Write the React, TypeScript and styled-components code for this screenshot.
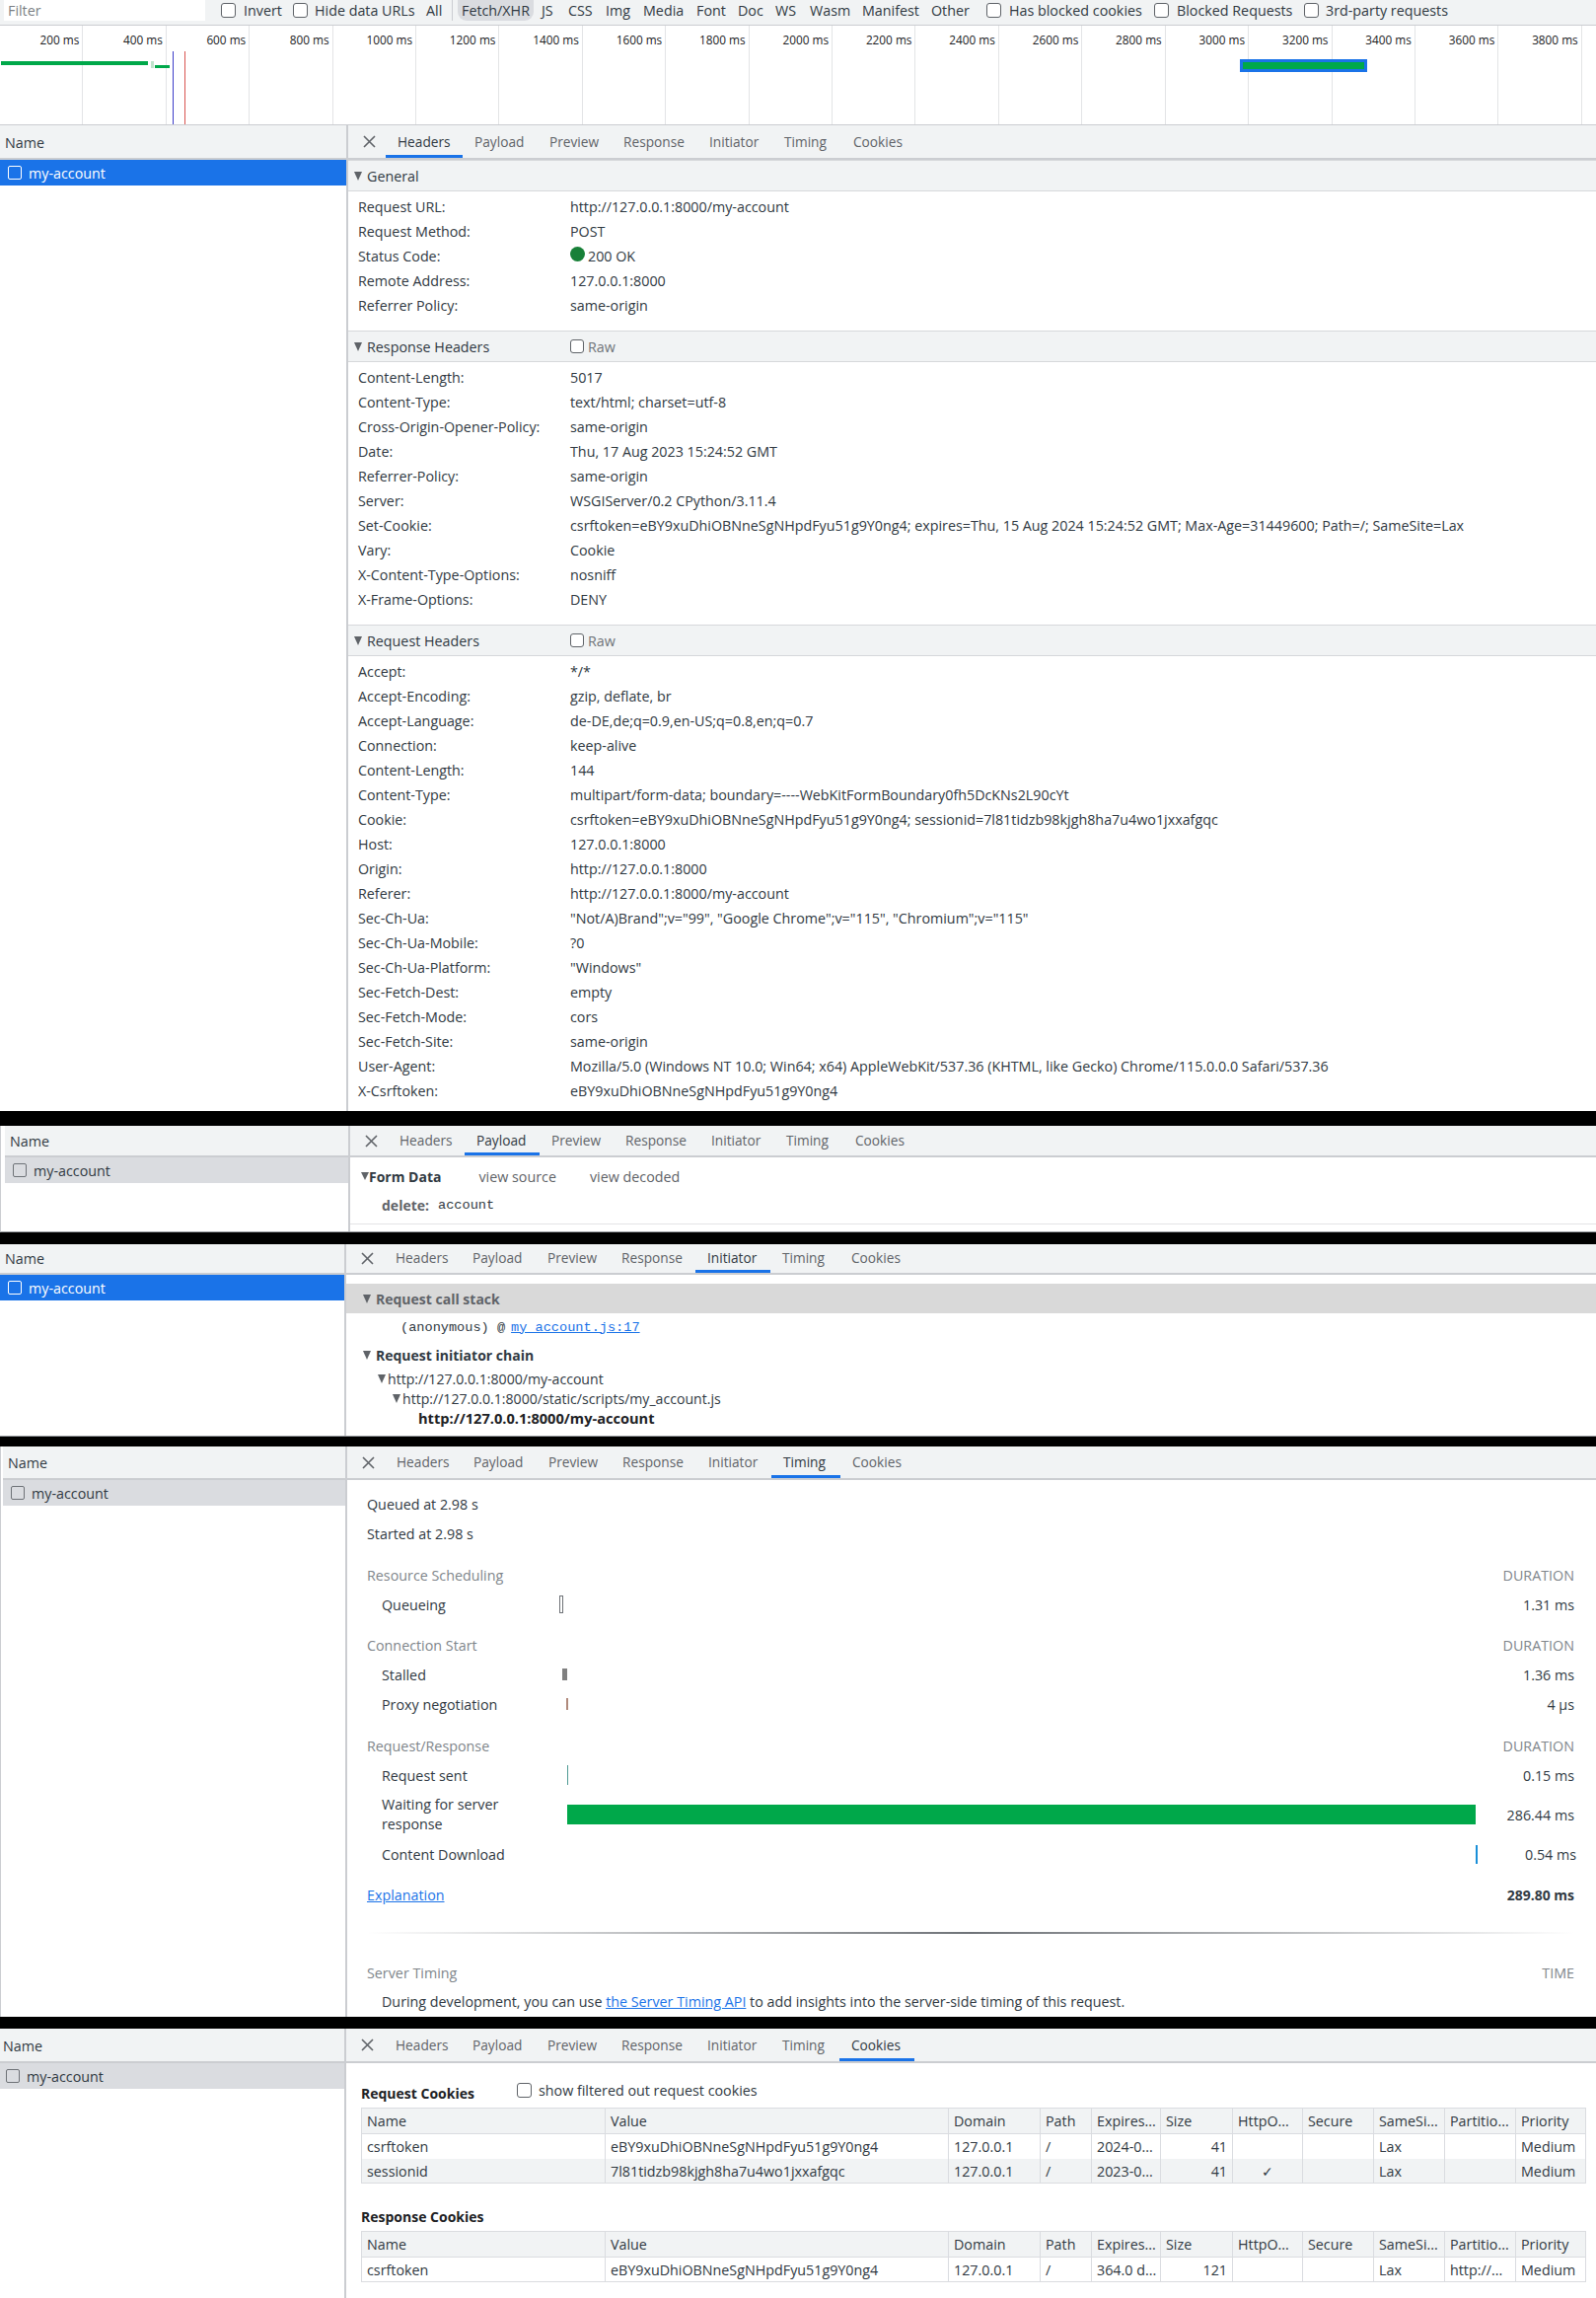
import React from 'react'
import styled, { createGlobalStyle } from 'styled-components'

const GlobalStyle = createGlobalStyle`
  html, body {
    margin: 0;
    padding: 0;
    background: #000;
  }
  body {
    font-family: 'Open Sans', 'Noto Sans', sans-serif;
    font-size: 14.3px;
    color: #303942;
  }
  * {
    box-sizing: border-box;
  }
`

const Page = styled.div`
  width: 1618px;
  height: 2329px;
  overflow: hidden;
  display: flex;
  flex-direction: column;
  background: #000;
`

/* top toolbar */
const Toolbar = styled.div`
  height: 26px;
  display: flex;
  align-items: flex-start;
  background: #f1f3f4;
  border-bottom: 1px solid #cbcdd1;
  white-space: nowrap;
`

const FilterInput = styled.div`
  width: 204px;
  height: 21px;
  margin-left: 4px;
  margin-right: 16px;
  padding-left: 4px;
  line-height: 21px;
  background: #fff;
  color: #7b7f84;
`

const ToolLabel = styled.span<{ $width: number }>`
  display: inline-flex;
  align-items: center;
  width: ${p => p.$width}px;
  height: 21px;
  flex: none;
`

const CheckBox = styled.span<{ $gap?: number }>`
  display: inline-block;
  flex: none;
  width: 15px;
  height: 15px;
  margin-right: ${p => p.$gap ?? 8}px;
  background: #fff;
  border: 1.5px solid #5f6368;
  border-radius: 3px;
`

const ToolSep = styled.span`
  width: 1px;
  height: 21px;
  margin: 0 5px 0 0;
  background: #cbcdd1;
  flex: none;
`

const FilterChip = styled.span<{ $active?: boolean; $width: number }>`
  display: inline-flex;
  align-items: center;
  justify-content: ${p => (p.$active ? 'center' : 'flex-start')};
  width: ${p => p.$width}px;
  height: 21px;
  flex: none;
  border-radius: 0 0 9px 9px;
  background: ${p => (p.$active ? '#dadce0' : 'transparent')};
`

/* overview */
const Overview = styled.div`
  position: relative;
  height: 101px;
  display: flex;
  background: #fff;
  border-bottom: 1px solid #cbcdd1;
  overflow: hidden;
`

const Tick = styled.div`
  flex: none;
  width: 84.42px;
  padding: 4px 3px 0 0;
  text-align: right;
  font-size: 11.8px;
  line-height: 20px;
  color: #202124;
  border-right: 1px solid #e3e4e6;
  white-space: nowrap;
`

const OverviewBar = styled.div<{ $x: number; $y: number; $w: number; $h: number; $c: string }>`
  position: absolute;
  left: ${p => p.$x}px;
  top: ${p => p.$y}px;
  width: ${p => p.$w}px;
  height: ${p => p.$h}px;
  background: ${p => p.$c};
`

const SelectedBar = styled(OverviewBar)`
  border: 3px solid #1a73e8;
`

/* panels */
const Panel = styled.div<{ $height: number; $gutter?: number; $gutterLine?: boolean; $bottomLine?: boolean; $nameWidth: number }>`
  height: ${p => p.$height}px;
  flex: none;
  display: grid;
  grid-template-columns: ${p => p.$nameWidth}px 1fr;
  padding-left: ${p => p.$gutter ?? 0}px;
  background: #fff;
  overflow: hidden;
  border-left: ${p => (p.$gutterLine ? '1px solid #cbcdd1' : 'none')};
  border-bottom: ${p => (p.$bottomLine ? '1px solid #9a9da1' : 'none')};
`

const Gap = styled.div<{ $height: number }>`
  height: ${p => p.$height}px;
  flex: none;
  background: #000;
`

const NameColumn = styled.div`
  border-right: 2px solid #cbcdd1;
  min-width: 0;
`

const NameHeader = styled.div<{ $height: number; $inset: number; $lift: number }>`
  height: ${p => p.$height}px;
  padding-left: ${p => p.$inset}px;
  line-height: ${p => p.$height - p.$lift}px;
  background: #f1f3f4;
  border-bottom: 2px solid #cbcdd1;
  color: #303942;
`

const NameRow = styled.div<{ $selected?: boolean; $inset: number }>`
  height: 26px;
  display: flex;
  align-items: center;
  gap: 7px;
  padding-left: ${p => p.$inset}px;
  background: ${p => (p.$selected ? '#1a73e8' : '#dadce0')};
  color: ${p => (p.$selected ? '#fff' : '#303942')};
`

const FileIcon = styled.span<{ $selected?: boolean }>`
  width: 14px;
  height: 14px;
  border: 1.5px solid ${p => (p.$selected ? '#fff' : '#6e7277')};
  border-radius: 2px;
`

const Detail = styled.div`
  min-width: 0;
`

const TabBar = styled.div<{ $height: number }>`
  height: ${p => p.$height}px;
  display: grid;
  grid-template-columns: 38px 78px 76px 75px 87px 76px 70px 76px;
  background: #f1f3f4;
  border-bottom: 2px solid #cbcdd1;
`

const Close = styled.div`
  display: flex;
  align-items: center;
  justify-content: center;
  padding-left: 4px;
  color: #5f6368;
`

const Tab = styled.div<{ $active?: boolean; $height: number; $lift: number }>`
  height: ${p => p.$height}px;
  padding-left: 12px;
  font-size: 13.7px;
  line-height: ${p => p.$height - p.$lift}px;
  color: ${p => (p.$active ? '#303942' : '#5f6368')};
  border-bottom: 3px solid ${p => (p.$active ? '#1a73e8' : 'transparent')};
  white-space: nowrap;
`

/* headers tab */
const SectionHead = styled.div`
  height: 32px;
  display: grid;
  grid-template-columns: 219px 1fr;
  align-items: center;
  padding-left: 6px;
  background: #f1f3f4;
  border-top: 1px solid #d6d8db;
  border-bottom: 1px solid #d6d8db;
  color: #303942;
`

const SectionTitle = styled.div`
  display: flex;
  align-items: center;
  gap: 5px;
`

const Triangle = styled.span<{ $color?: string; $size?: number }>`
  display: inline-block;
  flex: none;
  width: 0;
  height: 0;
  border-left: ${p => (p.$size ?? 9) / 2}px solid transparent;
  border-right: ${p => (p.$size ?? 9) / 2}px solid transparent;
  border-top: ${p => p.$size ?? 9}px solid ${p => p.$color ?? '#5f6368'};
`

const RawToggle = styled.div`
  display: flex;
  align-items: center;
  color: #6f7378;
`

const SmallCheck = styled(CheckBox)`
  width: 14px;
  height: 14px;
  margin-right: 4px;
  border-width: 1px;
`

const Rows = styled.div<{ $bottom: number }>`
  padding: 3px 0 ${p => p.$bottom}px 10px;
`

const HeaderRow = styled.div`
  height: 25px;
  display: grid;
  grid-template-columns: 215px 1fr;
  align-items: center;
  white-space: nowrap;
  color: #303942;
`

const ValueCell = styled.span`
  display: flex;
  align-items: center;
`

const StatusDot = styled.span`
  flex: none;
  width: 15px;
  height: 15px;
  margin: -4px 3px 0 0;
  border-radius: 50%;
  background: #188038;
`

/* payload tab */
const FormHead = styled.div`
  height: 38px;
  display: flex;
  align-items: center;
  padding-left: 11px;
`

const BoldLabel = styled.span`
  font-size: 14px;
  font-weight: 700;
  color: #303942;
`

const PlainLink = styled.span<{ $gap: number }>`
  margin-left: ${p => p.$gap}px;
  color: #5f6368;
`

const FormRow = styled.div`
  height: 30px;
  padding: 0 0 8px 32px;
  display: flex;
  align-items: center;
  gap: 9px;
  border-bottom: 1px solid #e3e4e6;
`

const FormKey = styled.span`
  font-size: 14px;
  font-weight: 700;
  color: #5f6368;
`

const Mono = styled.span`
  font-family: 'Liberation Mono', 'DejaVu Sans Mono', monospace;
  font-size: 13.6px;
  color: #303942;
`

/* initiator tab */
const CallStackHead = styled.div`
  height: 30px;
  margin-top: 9px;
  display: flex;
  align-items: center;
  gap: 5px;
  padding-left: 17px;
  background: #d9d9d9;
  color: #5f6368;
  font-size: 14px;
  font-weight: 700;
`

const StackLine = styled.div`
  height: 28px;
  display: flex;
  align-items: center;
  padding-left: 55px;
`

const MonoLink = styled(Mono)`
  color: #1a73e8;
  text-decoration: underline;
  margin-left: 6px;
`

const ChainHead = styled.div`
  height: 28px;
  display: flex;
  align-items: center;
  gap: 5px;
  padding-left: 17px;
  font-size: 14px;
  font-weight: 700;
  color: #303942;
`

const ChainLine = styled.div<{ $indent: number; $bold?: boolean }>`
  height: 20px;
  display: flex;
  align-items: center;
  gap: 2px;
  padding-left: ${p => p.$indent}px;
  font-size: ${p => (p.$bold ? 14.6 : 14.1)}px;
  font-weight: ${p => (p.$bold ? 700 : 400)};
  color: ${p => (p.$bold ? '#202124' : '#303942')};
`

/* timing tab */
const TimingBody = styled.div`
  padding: 10px 22px 0 20px;
`

const TimingLine = styled.div<{ $indent?: number; $height?: number }>`
  height: ${p => p.$height ?? 30}px;
  padding-left: ${p => p.$indent ?? 0}px;
  display: grid;
  grid-template-columns: 180px 1fr 100px;
  align-items: center;
  color: #303942;
`

const Plain = styled.div<{ $top?: number; $indent?: number }>`
  height: 30px;
  margin-top: ${p => p.$top ?? 0}px;
  padding-left: ${p => p.$indent ?? 0}px;
  line-height: 30px;
  white-space: nowrap;
`

const TwoEnds = styled.div<{ $top?: number; $muted?: boolean }>`
  height: 30px;
  margin-top: ${p => p.$top ?? 0}px;
  display: flex;
  justify-content: space-between;
  align-items: center;
  color: ${p => (p.$muted ? '#80868b' : '#303942')};
`

const RightValue = styled.div`
  text-align: right;
  white-space: nowrap;
`

const WaitLabel = styled.div`
  line-height: 20px;
`

const Bar = styled.div<{ $x: number; $w: number; $h: number; $c: string; $outline?: boolean }>`
  margin-left: ${p => p.$x}px;
  width: ${p => p.$w}px;
  height: ${p => p.$h}px;
  background: ${p => (p.$outline ? 'transparent' : p.$c)};
  border: ${p => (p.$outline ? `1px solid ${p.$c}` : 'none')};
`

const Link = styled.span`
  color: #1a73e8;
  text-decoration: underline;
`

const Divider = styled.div`
  height: 2px;
  margin-top: 23px;
  background: linear-gradient(90deg, #fff, #6e7277 50%, #fff);
`

/* cookies tab */
const CookieBody = styled.div`
  padding: 15px 11px 0 15px;
`

const CookieTitle = styled.div<{ $top?: number }>`
  height: 30px;
  margin-top: ${p => p.$top ?? 0}px;
  display: flex;
  align-items: center;
  font-size: 14px;
  font-weight: 700;
  color: #202124;
`

const FilterToggle = styled.span`
  display: inline-flex;
  align-items: center;
  margin: -6px 0 0 43px;
  font-size: 14.3px;
  font-weight: 400;
  color: #303942;
`

const CookieTable = styled.table`
  width: 1241px;
  border-collapse: collapse;
  table-layout: fixed;
  border: 1px solid #dadce0;
`

const Th = styled.th`
  height: 26px;
  padding: 0 5px;
  text-align: left;
  font-weight: 400;
  background: #f1f3f4;
  border: 1px solid #dadce0;
  color: #303942;
  white-space: nowrap;
  overflow: hidden;
`

const Td = styled.td<{ $right?: boolean; $center?: boolean }>`
  height: 25px;
  padding: 1px 5px 0;
  text-align: ${p => (p.$right ? 'right' : p.$center ? 'center' : 'left')};
  border-left: 1px solid #dadce0;
  border-right: 1px solid #dadce0;
  color: #303942;
  white-space: nowrap;
  overflow: hidden;
`

const Tr = styled.tr<{ $alt?: boolean }>`
  background: ${p => (p.$alt ? '#f1f3f4' : '#fff')};
`

const tickLabels = Array.from({ length: 19 }, (_, i) => `${(i + 1) * 200} ms`)
const tabNames = ['Headers', 'Payload', 'Preview', 'Response', 'Initiator', 'Timing', 'Cookies']

const general = [
  ['Request URL:', 'http://127.0.0.1:8000/my-account'],
  ['Request Method:', 'POST'],
  ['Status Code:', '200 OK'],
  ['Remote Address:', '127.0.0.1:8000'],
  ['Referrer Policy:', 'same-origin'],
]

const responseHeaders = [
  ['Content-Length:', '5017'],
  ['Content-Type:', 'text/html; charset=utf-8'],
  ['Cross-Origin-Opener-Policy:', 'same-origin'],
  ['Date:', 'Thu, 17 Aug 2023 15:24:52 GMT'],
  ['Referrer-Policy:', 'same-origin'],
  ['Server:', 'WSGIServer/0.2 CPython/3.11.4'],
  ['Set-Cookie:', 'csrftoken=eBY9xuDhiOBNneSgNHpdFyu51g9Y0ng4; expires=Thu, 15 Aug 2024 15:24:52 GMT; Max-Age=31449600; Path=/; SameSite=Lax'],
  ['Vary:', 'Cookie'],
  ['X-Content-Type-Options:', 'nosniff'],
  ['X-Frame-Options:', 'DENY'],
]

const requestHeaders = [
  ['Accept:', '*/*'],
  ['Accept-Encoding:', 'gzip, deflate, br'],
  ['Accept-Language:', 'de-DE,de;q=0.9,en-US;q=0.8,en;q=0.7'],
  ['Connection:', 'keep-alive'],
  ['Content-Length:', '144'],
  ['Content-Type:', 'multipart/form-data; boundary=----WebKitFormBoundary0fh5DcKNs2L90cYt'],
  ['Cookie:', 'csrftoken=eBY9xuDhiOBNneSgNHpdFyu51g9Y0ng4; sessionid=7l81tidzb98kjgh8ha7u4wo1jxxafgqc'],
  ['Host:', '127.0.0.1:8000'],
  ['Origin:', 'http://127.0.0.1:8000'],
  ['Referer:', 'http://127.0.0.1:8000/my-account'],
  ['Sec-Ch-Ua:', '"Not/A)Brand";v="99", "Google Chrome";v="115", "Chromium";v="115"'],
  ['Sec-Ch-Ua-Mobile:', '?0'],
  ['Sec-Ch-Ua-Platform:', '"Windows"'],
  ['Sec-Fetch-Dest:', 'empty'],
  ['Sec-Fetch-Mode:', 'cors'],
  ['Sec-Fetch-Site:', 'same-origin'],
  ['User-Agent:', 'Mozilla/5.0 (Windows NT 10.0; Win64; x64) AppleWebKit/537.36 (KHTML, like Gecko) Chrome/115.0.0.0 Safari/537.36'],
  ['X-Csrftoken:', 'eBY9xuDhiOBNneSgNHpdFyu51g9Y0ng4'],
]

const cookieColumns = [247, 348, 93, 52, 70, 73, 71, 72, 72, 72, 71]
const cookieHeads = ['Name', 'Value', 'Domain', 'Path', 'Expires...', 'Size', 'HttpO...', 'Secure', 'SameSi...', 'Partitio...', 'Priority']
const token = 'eBY9xuDhiOBNneSgNHpdFyu51g9Y0ng4'

const Tabs = ({ active, height, lift = 0 }: { active: string; height: number; lift?: number }) => (
  <TabBar $height={height}>
    <Close>
      <svg width="15" height="15" viewBox="0 0 15 15" fill="none" stroke="#5f6368" strokeWidth="1.6">
        <path d="M2 2l11 11M13 2L2 13" />
      </svg>
    </Close>
    {tabNames.map(t => (
      <Tab key={t} $active={t === active} $height={height - 2} $lift={lift}>{t}</Tab>
    ))}
  </TabBar>
)

const NamePane = ({ height, inset, selected, lift = 0 }: { height: number; inset: number; selected?: boolean; lift?: number }) => (
  <NameColumn>
    <NameHeader $height={height} $inset={inset} $lift={lift}>Name</NameHeader>
    <NameRow $selected={selected} $inset={inset + 3}>
      <FileIcon $selected={selected} />
      my-account
    </NameRow>
  </NameColumn>
)

const KeyValues = ({ items, bottom }: { items: string[][]; bottom: number }) => (
  <Rows $bottom={bottom}>
    {items.map(([k, v]) => (
      <HeaderRow key={k}>
        <span>{k}</span>
        <ValueCell>
          {v === '200 OK' && <StatusDot />}
          {v}
        </ValueCell>
      </HeaderRow>
    ))}
  </Rows>
)

const SectionHeader = ({ title, raw }: { title: string; raw?: boolean }) => (
  <SectionHead>
    <SectionTitle>
      <Triangle />
      {title}
    </SectionTitle>
    {raw && (
      <RawToggle>
        <SmallCheck />
        Raw
      </RawToggle>
    )}
  </SectionHead>
)

const CookieGrid = ({ rows }: { rows: string[][] }) => (
  <CookieTable>
    <colgroup>
      {cookieColumns.map((w, i) => (
        <col key={i} style={{ width: w }} />
      ))}
    </colgroup>
    <thead>
      <tr>
        {cookieHeads.map(h => (
          <Th key={h}>{h}</Th>
        ))}
      </tr>
    </thead>
    <tbody>
      {rows.map((row, r) => (
        <Tr key={r} $alt={r % 2 === 1}>
          {row.map((c, i) => (
            <Td key={i} $right={i === 5} $center={i === 6}>{c}</Td>
          ))}
        </Tr>
      ))}
    </tbody>
  </CookieTable>
)

const App = () => (
  <Page>
    <GlobalStyle />
    <Toolbar>
      <FilterInput>Filter</FilterInput>
      <ToolLabel $width={73}><CheckBox />Invert</ToolLabel>
      <ToolLabel $width={135}><CheckBox $gap={7} />Hide data URLs</ToolLabel>
      <ToolLabel $width={26}>All</ToolLabel>
      <ToolSep />
      <FilterChip $active $width={77}>Fetch/XHR</FilterChip>
      <FilterChip $width={8} />
      <FilterChip $width={27}>JS</FilterChip>
      <FilterChip $width={38}>CSS</FilterChip>
      <FilterChip $width={38}>Img</FilterChip>
      <FilterChip $width={54}>Media</FilterChip>
      <FilterChip $width={42}>Font</FilterChip>
      <FilterChip $width={38}>Doc</FilterChip>
      <FilterChip $width={35}>WS</FilterChip>
      <FilterChip $width={53}>Wasm</FilterChip>
      <FilterChip $width={70}>Manifest</FilterChip>
      <FilterChip $width={56}>Other</FilterChip>
      <ToolLabel $width={170}><CheckBox />Has blocked cookies</ToolLabel>
      <ToolLabel $width={152}><CheckBox />Blocked Requests</ToolLabel>
      <ToolLabel $width={160}><CheckBox $gap={7} />3rd-party requests</ToolLabel>
    </Toolbar>
    <Overview>
      {tickLabels.map(t => (
        <Tick key={t}>{t}</Tick>
      ))}
      <OverviewBar $x={1} $y={36} $w={149} $h={4} $c="#00a84a" />
      <OverviewBar $x={153} $y={36} $w={3} $h={7} $c="#bfe3cc" />
      <OverviewBar $x={157} $y={40} $w={15} $h={3} $c="#00a84a" />
      <OverviewBar $x={175} $y={26} $w={1} $h={75} $c="#3c3cc8" />
      <OverviewBar $x={187} $y={26} $w={1} $h={75} $c="#d9534f" />
      <SelectedBar $x={1257} $y={34} $w={129} $h={13} $c="#00a84a" />
    </Overview>

    <Panel $height={999} $nameWidth={353}>
      <NamePane height={35} inset={5} selected />
      <Detail>
        <Tabs active="Headers" height={35} />
        <SectionHeader title="General" />
        <KeyValues items={general} bottom={13} />
        <SectionHeader title="Response Headers" raw />
        <KeyValues items={responseHeaders} bottom={13} />
        <SectionHeader title="Request Headers" raw />
        <KeyValues items={requestHeaders} bottom={4} />
      </Detail>
    </Panel>
    <Gap $height={15} />

    <Panel $height={108} $nameWidth={350} $gutter={4} $gutterLine $bottomLine>
      <NamePane height={32} inset={5} />
      <Detail>
        <Tabs active="Payload" height={32} />
        <FormHead>
          <Triangle $size={8} />
          <BoldLabel>Form Data</BoldLabel>
          <PlainLink $gap={38}>view source</PlainLink>
          <PlainLink $gap={34}>view decoded</PlainLink>
        </FormHead>
        <FormRow>
          <FormKey>delete:</FormKey>
          <Mono>account</Mono>
        </FormRow>
      </Detail>
    </Panel>
    <Gap $height={12} />

    <Panel $height={195} $nameWidth={351} $bottomLine>
      <NamePane height={31} inset={5} selected lift={2} />
      <Detail>
        <Tabs active="Initiator" height={31} lift={2} />
        <CallStackHead>
          <Triangle />
          Request call stack
        </CallStackHead>
        <StackLine>
          <Mono>(anonymous) @</Mono>
          <MonoLink>my_account.js:17</MonoLink>
        </StackLine>
        <ChainHead>
          <Triangle />
          Request initiator chain
        </ChainHead>
        <ChainLine $indent={32}><Triangle />http://127.0.0.1:8000/my-account</ChainLine>
        <ChainLine $indent={47}><Triangle />http://127.0.0.1:8000/static/scripts/my_account.js</ChainLine>
        <ChainLine $indent={73} $bold>http://127.0.0.1:8000/my-account</ChainLine>
      </Detail>
    </Panel>
    <Gap $height={10} />

    <Panel $height={578} $nameWidth={349} $gutter={2} $gutterLine>
      <NamePane height={34} inset={5} />
      <Detail>
        <Tabs active="Timing" height={34} />
        <TimingBody>
          <Plain>Queued at 2.98 s</Plain>
          <Plain>Started at 2.98 s</Plain>

          <TwoEnds $top={11} $muted><span>Resource Scheduling</span><span>DURATION</span></TwoEnds>
          <TimingLine $indent={15}>
            <span>Queueing</span>
            <Bar $x={0} $w={4} $h={18} $c="#6e7277" $outline />
            <RightValue>1.31 ms</RightValue>
          </TimingLine>

          <TwoEnds $top={11} $muted><span>Connection Start</span><span>DURATION</span></TwoEnds>
          <TimingLine $indent={15}>
            <span>Stalled</span>
            <Bar $x={3} $w={5} $h={12} $c="#808080" />
            <RightValue>1.36 ms</RightValue>
          </TimingLine>
          <TimingLine $indent={15}>
            <span>Proxy negotiation</span>
            <Bar $x={7} $w={2} $h={12} $c="#b08a7c" />
            <RightValue>4 µs</RightValue>
          </TimingLine>

          <TwoEnds $top={12} $muted><span>Request/Response</span><span>DURATION</span></TwoEnds>
          <TimingLine $indent={15}>
            <span>Request sent</span>
            <Bar $x={8} $w={1} $h={20} $c="#4f9a94" />
            <RightValue>0.15 ms</RightValue>
          </TimingLine>
          <TimingLine $indent={15} $height={50}>
            <WaitLabel>Waiting for server<br />response</WaitLabel>
            <Bar $x={8} $w={921} $h={20} $c="#00a84a" />
            <RightValue>286.44 ms</RightValue>
          </TimingLine>
          <TimingLine $indent={15}>
            <span>Content Download</span>
            <Bar $x={929} $w={2} $h={19} $c="#1a8fd8" />
            <RightValue>0.54 ms</RightValue>
          </TimingLine>

          <TwoEnds $top={11}>
            <Link>Explanation</Link>
            <BoldLabel>289.80 ms</BoldLabel>
          </TwoEnds>
          <Divider />
          <TwoEnds $top={24} $muted><span>Server Timing</span><span>TIME</span></TwoEnds>
          <Plain $indent={15}>
            During development, you can use <Link>the Server Timing API</Link> to add insights into the server-side timing of this request.
          </Plain>
        </TimingBody>
      </Detail>
    </Panel>
    <Gap $height={12} />

    <Panel $height={273} $nameWidth={351}>
      <NamePane height={35} inset={3} />
      <Detail>
        <Tabs active="Cookies" height={35} />
        <CookieBody>
          <CookieTitle>
            Request Cookies
            <FilterToggle>
              <CheckBox $gap={7} />
              show filtered out request cookies
            </FilterToggle>
          </CookieTitle>
          <CookieGrid
            rows={[
              ['csrftoken', token, '127.0.0.1', '/', '2024-0...', '41', '', '', 'Lax', '', 'Medium'],
              ['sessionid', '7l81tidzb98kjgh8ha7u4wo1jxxafgqc', '127.0.0.1', '/', '2023-0...', '41', '✓', '', 'Lax', '', 'Medium'],
            ]}
          />
          <CookieTitle $top={18}>Response Cookies</CookieTitle>
          <CookieGrid
            rows={[['csrftoken', token, '127.0.0.1', '/', '364.0 d...', '121', '', '', 'Lax', 'http://...', 'Medium']]}
          />
        </CookieBody>
      </Detail>
    </Panel>
  </Page>
)

export default App
